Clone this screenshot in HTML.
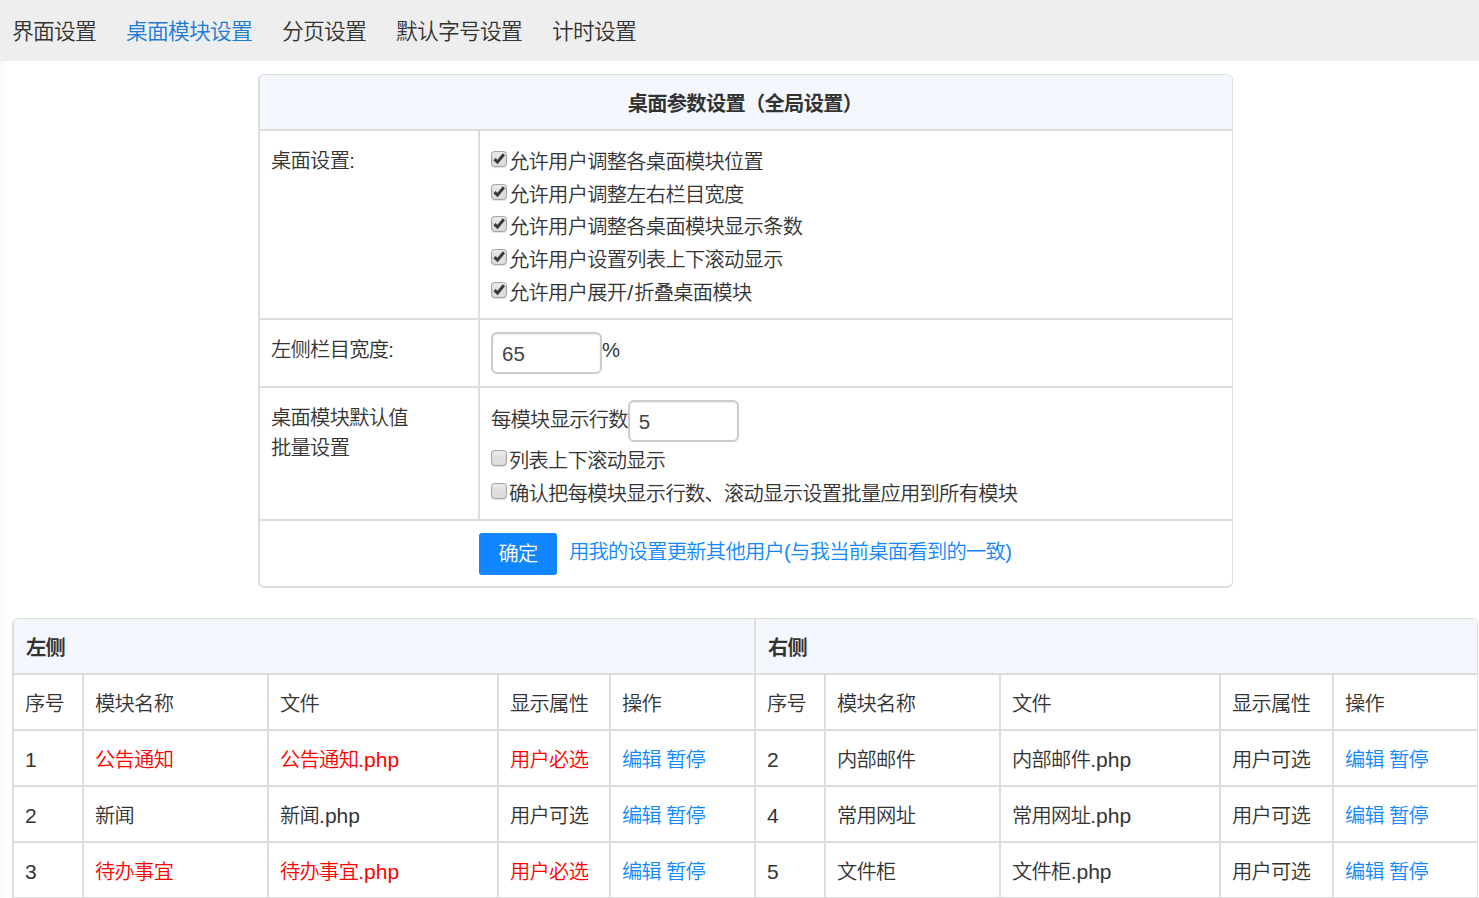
<!DOCTYPE html>
<html lang="zh-CN">
<head>
<meta charset="utf-8">
<title>桌面模块设置</title>
<style>
html,body{margin:0;padding:0;}
body{
  width:1479px;height:898px;overflow:hidden;position:relative;
  background:#fff linear-gradient(to right,#f7f7f7 0,#fafafa 3px,#fdfdfd 7px,#fff 8px) no-repeat;
  font-family:"Liberation Sans","Noto Sans CJK SC",sans-serif;
  font-size:20.25px;letter-spacing:-0.7px;line-height:33px;color:#333;font-weight:350;
}
a{color:#1087ff;text-decoration:none;}
.en{font-size:21px;line-height:1;letter-spacing:0;}
.sl{padding:0 1px;}
/* ---------- top nav ---------- */
.nav{position:absolute;left:0;top:0;width:1479px;height:61px;background:#eee;}
.nav a{position:absolute;top:0;font-size:21.8px;letter-spacing:-0.8px;line-height:63px;color:#333;white-space:nowrap;}
.nav a.on{color:#1b7bd5;}
/* ---------- settings panel ---------- */
.panel{
  position:absolute;left:258px;top:74px;width:975px;height:514px;box-sizing:border-box;
  border:solid #ddd;border-width:1px 1px 2px 2px;border-radius:6px;overflow:hidden;background:#fff;
}
.panel .hd{height:54px;background:#f4f8fe;border-bottom:2px solid #ddd;text-align:center;font-weight:bold;line-height:58px;padding-right:2px;}
.row{position:relative;border-bottom:2px solid #ddd;box-sizing:border-box;}
.row .lab{position:absolute;left:0;top:0;bottom:0;width:220px;border-right:2px solid #ddd;padding:15px 0 0 11px;box-sizing:border-box;line-height:30px;}
.row .val{margin-left:231px;padding-top:14px;}
.r1{height:189px;}
.r2{height:68px;}
.r2 .val,.r3 .val{padding-top:12px;}
.r3 .l1{height:45px;}
.r3 .l1 .t{position:relative;top:4px;}
.r2 .t{position:relative;top:2px;}
.r3{height:133px;}
.r4{height:65px;border-bottom:0;}
.ck{display:inline-block;box-sizing:border-box;width:16px;height:16px;vertical-align:top;margin:-1px 2px 0 0;position:relative;top:7px;
  border:1px solid #a3a3a3;border-radius:3.5px;background:linear-gradient(#eee 0,#dedede 45%,#dedede);box-shadow:inset 0 0 1px rgba(0,0,0,.22),0 1px 1px rgba(0,0,0,.13);}
.r1 .val{padding-top:15px;}
.r1 .val div{height:32.67px;line-height:32.67px;}
.r1 .ck,.r3 .ck{top:6px;}
.ck svg{display:block;}
.inp{
  display:inline-block;box-sizing:border-box;width:111px;height:42px;border:2px solid #ccc;border-radius:6px;
  box-shadow:inset 0 1px 2px rgba(0,0,0,.08);padding-left:9px;line-height:39px;font-size:20.5px;letter-spacing:0;vertical-align:top;background:#fff;color:#444;
}
.btn{position:absolute;left:219px;top:12px;width:78px;height:42px;border-radius:3px;background:#1087ff;color:#fff;text-align:center;line-height:43px;}
.lnk{position:absolute;left:309px;top:15px;white-space:nowrap;color:#1087ff;}
/* ---------- module tables ---------- */
.grid{
  position:absolute;left:12px;top:618px;width:1466px;height:300px;box-sizing:border-box;
  border:solid #ddd;border-width:1px 1px 0 2px;border-radius:6px 6px 0 0;overflow:hidden;background:#fff;
}
.grid .c{position:absolute;box-sizing:border-box;border-right:2px solid #ddd;border-bottom:2px solid #ddd;padding:0 0 0 11px;line-height:59px;height:56px;white-space:nowrap;}
.grid .h{background:#f4f8fe;font-weight:700;height:56px;line-height:58px;padding-left:12px;}
.red{color:#f00;}
</style>
</head>
<body>
<div class="nav">
  <a style="left:12px">界面设置</a>
  <a class="on" style="left:126px">桌面模块设置</a>
  <a style="left:282px">分页设置</a>
  <a style="left:396px">默认字号设置</a>
  <a style="left:552px">计时设置</a>
</div>

<div class="panel">
  <div class="hd">桌面参数设置（全局设置）</div>
  <div class="row r1">
    <div class="lab">桌面设置:</div>
    <div class="val">
      <div><span class="ck on"><svg width="14" height="14" viewBox="0 0 14 14" style="overflow:visible"><polyline points="2.5,7.1 5.5,10.1 11.9,2.3" fill="none" stroke="#3a3a3a" stroke-width="3"/></svg></span>允许用户调整各桌面模块位置</div>
      <div><span class="ck on"><svg width="14" height="14" viewBox="0 0 14 14" style="overflow:visible"><polyline points="2.5,7.1 5.5,10.1 11.9,2.3" fill="none" stroke="#3a3a3a" stroke-width="3"/></svg></span>允许用户调整左右栏目宽度</div>
      <div><span class="ck on"><svg width="14" height="14" viewBox="0 0 14 14" style="overflow:visible"><polyline points="2.5,7.1 5.5,10.1 11.9,2.3" fill="none" stroke="#3a3a3a" stroke-width="3"/></svg></span>允许用户调整各桌面模块显示条数</div>
      <div><span class="ck on"><svg width="14" height="14" viewBox="0 0 14 14" style="overflow:visible"><polyline points="2.5,7.1 5.5,10.1 11.9,2.3" fill="none" stroke="#3a3a3a" stroke-width="3"/></svg></span>允许用户设置列表上下滚动显示</div>
      <div><span class="ck on"><svg width="14" height="14" viewBox="0 0 14 14" style="overflow:visible"><polyline points="2.5,7.1 5.5,10.1 11.9,2.3" fill="none" stroke="#3a3a3a" stroke-width="3"/></svg></span>允许用户展开<span class="en sl">/</span>折叠桌面模块</div>
    </div>
  </div>
  <div class="row r2">
    <div class="lab">左侧栏目宽度:</div>
    <div class="val"><span class="inp">65</span><span class="t">%</span></div>
  </div>
  <div class="row r3">
    <div class="lab">桌面模块默认值<br>批量设置</div>
    <div class="val">
      <div class="l1"><span class="t">每模块显示行数</span><span class="inp">5</span></div>
      <div><span class="ck"></span>列表上下滚动显示</div>
      <div><span class="ck"></span>确认把每模块显示行数、滚动显示设置批量应用到所有模块</div>
    </div>
  </div>
  <div class="row r4">
    <span class="btn">确定</span>
    <a class="lnk">用我的设置更新其他用户(与我当前桌面看到的一致)</a>
  </div>
</div>

<div class="grid" id="grid">
  <div class="c h" style="left:0px;top:0px;width:742px">左侧</div>
  <div class="c h" style="left:742px;top:0px;width:721px;border-right:0">右侧</div>
  <div class="c" style="left:0px;top:56px;width:70px">序号</div>
  <div class="c" style="left:70px;top:56px;width:185px">模块名称</div>
  <div class="c" style="left:255px;top:56px;width:230px">文件</div>
  <div class="c" style="left:485px;top:56px;width:112px">显示属性</div>
  <div class="c" style="left:597px;top:56px;width:145px">操作</div>
  <div class="c" style="left:0px;top:112px;width:70px"><span class="en">1</span></div>
  <div class="c red" style="left:70px;top:112px;width:185px">公告通知</div>
  <div class="c red" style="left:255px;top:112px;width:230px">公告通知<span class="en">.php</span></div>
  <div class="c red" style="left:485px;top:112px;width:112px">用户必选</div>
  <div class="c" style="left:597px;top:112px;width:145px"><a>编辑</a> <a>暂停</a></div>
  <div class="c" style="left:0px;top:168px;width:70px"><span class="en">2</span></div>
  <div class="c" style="left:70px;top:168px;width:185px">新闻</div>
  <div class="c" style="left:255px;top:168px;width:230px">新闻<span class="en">.php</span></div>
  <div class="c" style="left:485px;top:168px;width:112px">用户可选</div>
  <div class="c" style="left:597px;top:168px;width:145px"><a>编辑</a> <a>暂停</a></div>
  <div class="c" style="left:0px;top:224px;width:70px"><span class="en">3</span></div>
  <div class="c red" style="left:70px;top:224px;width:185px">待办事宜</div>
  <div class="c red" style="left:255px;top:224px;width:230px">待办事宜<span class="en">.php</span></div>
  <div class="c red" style="left:485px;top:224px;width:112px">用户必选</div>
  <div class="c" style="left:597px;top:224px;width:145px"><a>编辑</a> <a>暂停</a></div>
  <div class="c" style="left:742px;top:56px;width:70px">序号</div>
  <div class="c" style="left:812px;top:56px;width:175px">模块名称</div>
  <div class="c" style="left:987px;top:56px;width:220px">文件</div>
  <div class="c" style="left:1207px;top:56px;width:113px">显示属性</div>
  <div class="c" style="left:1320px;top:56px;width:143px;border-right:0">操作</div>
  <div class="c" style="left:742px;top:112px;width:70px"><span class="en">2</span></div>
  <div class="c" style="left:812px;top:112px;width:175px">内部邮件</div>
  <div class="c" style="left:987px;top:112px;width:220px">内部邮件<span class="en">.php</span></div>
  <div class="c" style="left:1207px;top:112px;width:113px">用户可选</div>
  <div class="c" style="left:1320px;top:112px;width:143px;border-right:0"><a>编辑</a> <a>暂停</a></div>
  <div class="c" style="left:742px;top:168px;width:70px"><span class="en">4</span></div>
  <div class="c" style="left:812px;top:168px;width:175px">常用网址</div>
  <div class="c" style="left:987px;top:168px;width:220px">常用网址<span class="en">.php</span></div>
  <div class="c" style="left:1207px;top:168px;width:113px">用户可选</div>
  <div class="c" style="left:1320px;top:168px;width:143px;border-right:0"><a>编辑</a> <a>暂停</a></div>
  <div class="c" style="left:742px;top:224px;width:70px"><span class="en">5</span></div>
  <div class="c" style="left:812px;top:224px;width:175px">文件柜</div>
  <div class="c" style="left:987px;top:224px;width:220px">文件柜<span class="en">.php</span></div>
  <div class="c" style="left:1207px;top:224px;width:113px">用户可选</div>
  <div class="c" style="left:1320px;top:224px;width:143px;border-right:0"><a>编辑</a> <a>暂停</a></div>
</div>
</body>
</html>
